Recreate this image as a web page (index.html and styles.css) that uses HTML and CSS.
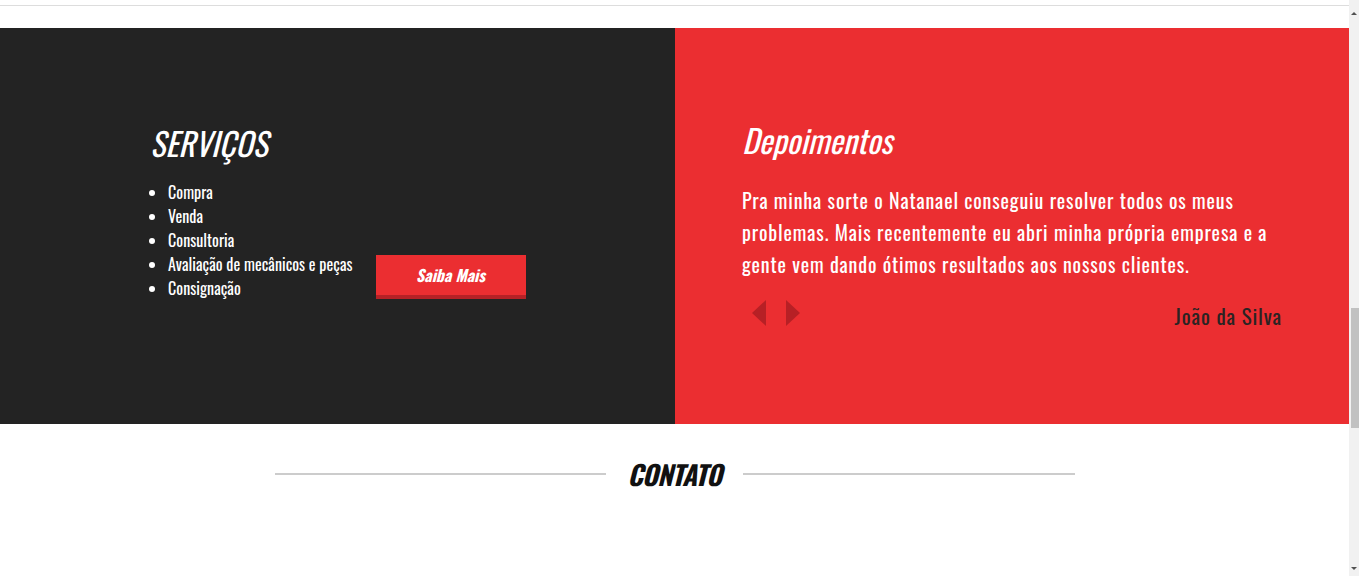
FILE: index.html
```html
<!DOCTYPE html>
<html lang="pt-BR">
<head>
<meta charset="utf-8">
<title>Serviços e Depoimentos</title>
<link rel="stylesheet" href="styles.css">
</head>
<body>
<section class="intro"></section>

<section class="split">
  <div class="col services">
    <h2 class="col-title">SERVIÇOS</h2>
    <div class="services-body">
      <ul class="service-list">
        <li>Compra</li>
        <li>Venda</li>
        <li>Consultoria</li>
        <li>Avaliação de mecânicos e peças</li>
        <li>Consignação</li>
      </ul>
      <a class="btn" href="#">Saiba Mais</a>
    </div>
  </div>
  <div class="col testimonials">
    <h2 class="col-title">Depoimentos</h2>
    <p class="quote">Pra minha sorte o Natanael conseguiu resolver todos os meus problemas. Mais recentemente eu abri minha própria empresa e a gente vem dando ótimos resultados aos nossos clientes.</p>
    <div class="quote-footer">
      <div class="arrows">
        <button class="arrow arrow-prev" aria-label="Anterior"></button>
        <button class="arrow arrow-next" aria-label="Próximo"></button>
      </div>
      <span class="author">João da Silva</span>
    </div>
  </div>
</section>

<section class="contact">
  <div class="contact-head">
    <span class="rule"></span>
    <h2 class="contact-title">CONTATO</h2>
    <span class="rule"></span>
  </div>
</section>

<div class="scrollbar" aria-hidden="true">
  <span class="sb-arrow sb-up"></span>
  <span class="sb-thumb"></span>
  <span class="sb-arrow sb-down"></span>
</div>
</body>
</html>
```

FILE: styles.css
```css
body {
  margin: 0 10px 0 0;
  font-family: "Oswald", "Liberation Sans", Arial, sans-serif;
  background: #fff;
  color: #222;
  overflow: hidden;
}

.intro {
  height: 5px;
  border-bottom: 1px solid #dddddd;
  margin-bottom: 22px;
}

.split {
  display: grid;
  grid-template-columns: 675px 1fr;
  height: 396px;
}

.col {
  box-sizing: border-box;
  color: #fff;
}

.services {
  background: #232323;
  padding: 97px 0 0 150px;
}

.testimonials {
  background: #eb2e31;
  padding: 94px 67px 0 67px;
}

.col-title {
  margin: 0;
  font-size: 32px;
  line-height: 36px;
  font-weight: 400;
  font-style: italic;
  letter-spacing: 0;
}

.services-body {
  display: flex;
  align-items: flex-end;
  gap: 23px;
  margin-top: 19px;
}

.service-list {
  margin: 0;
  padding: 0 0 0 18px;
  font-size: 16px;
  line-height: 24px;
  letter-spacing: 0.05px;
}

.btn {
  display: flex;
  align-items: center;
  justify-content: center;
  box-sizing: border-box;
  width: 150px;
  height: 44px;
  margin-bottom: 1px;
  background: #eb2e31;
  border-bottom: 4px solid #b52126;
  color: #fff;
  text-decoration: none;
  font-size: 16px;
  font-weight: 700;
  font-style: italic;
  letter-spacing: 0;
}

.quote {
  margin: 26px 0 0;
  font-size: 20px;
  line-height: 32px;
  letter-spacing: 0.85px;
}

.quote-footer {
  display: flex;
  justify-content: space-between;
  align-items: flex-start;
  margin-top: 20px;
}

.arrows {
  display: flex;
  gap: 20px;
  padding-left: 10px;
}

.arrow {
  width: 0;
  height: 0;
  padding: 0;
  background: none;
  border-style: solid;
  border-color: transparent;
  cursor: pointer;
}

.arrow-prev {
  border-width: 13.5px 14px 13.5px 0;
  border-right-color: #b72025;
}

.arrow-next {
  border-width: 13.5px 0 13.5px 14px;
  border-left-color: #b72025;
}

.author {
  padding-top: 2px;
  font-size: 21px;
  line-height: 27px;
  letter-spacing: 0.85px;
  color: #2b2323;
}

.contact {
  height: 152px;
  box-sizing: border-box;
  padding-top: 34px;
}

.contact-head {
  display: flex;
  align-items: center;
  gap: 21px;
  width: 800px;
  margin: 0 auto;
}

.rule {
  flex: 1;
  height: 2px;
  background: #cccccc;
}

.contact-title {
  margin: 0;
  font-size: 27px;
  line-height: 32px;
  font-weight: 700;
  font-style: italic;
  letter-spacing: -0.6px;
  color: #111;
}

/* decorative page scrollbar, drawn over the right edge */
.scrollbar {
  position: fixed;
  top: 0;
  right: 0;
  bottom: 0;
  width: 10px;
  display: flex;
  flex-direction: column;
  align-items: center;
  background: #f1f1f1;
}

.sb-arrow {
  width: 0;
  height: 0;
  border-style: solid;
  border-color: transparent;
}

.sb-up {
  margin-top: 12px;
  border-width: 0 3px 3px 3px;
  border-bottom-color: #505050;
}

.sb-down {
  margin-top: auto;
  margin-bottom: 6px;
  border-width: 3px 3px 0 3px;
  border-top-color: #505050;
}

.sb-thumb {
  align-self: flex-end;
  width: 8px;
  height: 120px;
  margin-top: 293px;
  background: #c1c1c1;
}
```
